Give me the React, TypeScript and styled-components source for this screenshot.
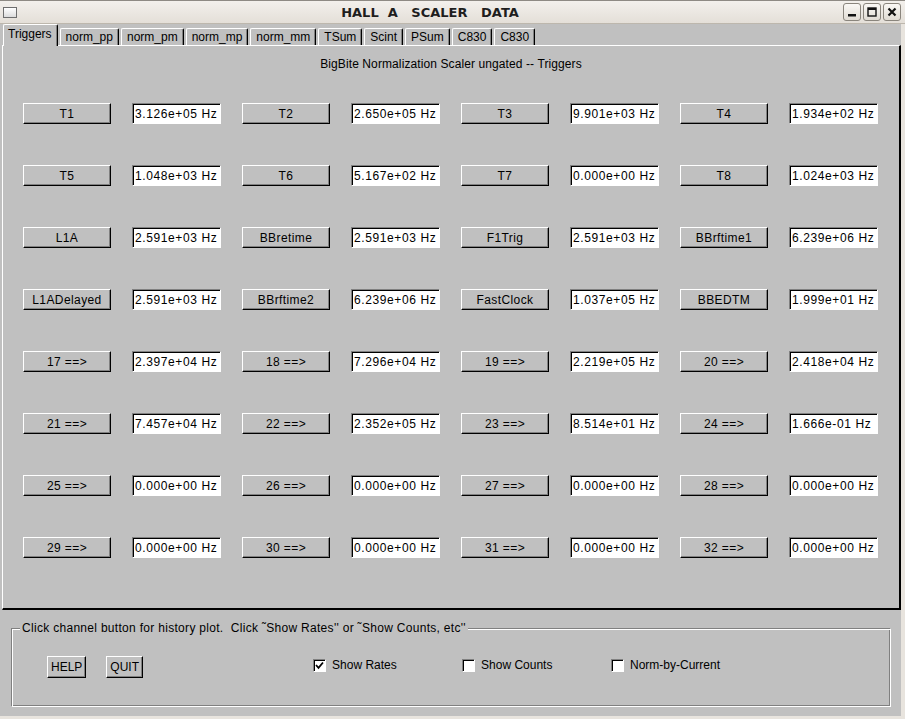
import styled, { createGlobalStyle } from "styled-components";

const GlobalStyle = createGlobalStyle`
  html, body {
    margin: 0;
    padding: 0;
    background: #e8e4de;
  }
  body {
    font-family: "Liberation Sans", Arial, sans-serif;
    font-size: 12px;
    color: #000;
  }
`;

const Window = styled.div`
  width: 905px;
  height: 719px;
  display: flex;
  flex-direction: column;
  background: #e8e4de;
  overflow: hidden;
`;

const TitleBar = styled.div`
  box-sizing: border-box;
  height: 24px;
  display: flex;
  align-items: center;
  padding: 0 4px 0 3px;
  background: linear-gradient(#f3f0ec, #e4dfd8);
  border-top: 1px solid #8e8a84;
  border-bottom: 1px solid #bdb7ad;
`;

const AppIcon = styled.div`
  box-sizing: border-box;
  width: 14px;
  height: 11px;
  border: 1px solid #6e6e6e;
  background: linear-gradient(#ffffff, #dcdcdc);
`;

const Title = styled.div`
  flex: 1;
  text-align: center;
  white-space: pre;
  font-family: "DejaVu Sans", sans-serif;
  font-weight: bold;
  font-size: 13px;
  color: #1e1e1e;
`;

const WinButtons = styled.div`
  display: flex;
  gap: 2px;
`;

const WinButton = styled.div`
  box-sizing: border-box;
  width: 18px;
  height: 18px;
  border: 1px solid #8a857d;
  border-radius: 3px;
  background: linear-gradient(#faf8f5, #e0dbd3);
  display: flex;
  align-items: center;
  justify-content: center;
`;

const Body = styled.div`
  flex: 1;
  display: flex;
  flex-direction: column;
  background: #c0c0c0;
  margin: 0 4px 3px 0;
`;

const TabStrip = styled.div`
  height: 21px;
  display: flex;
  align-items: flex-end;
  gap: 2px;
  padding-left: 3px;
  position: relative;
  z-index: 1;
`;

const Tab = styled.div<{ $active?: boolean }>`
  box-sizing: border-box;
  height: ${(p) => (p.$active ? 22 : 17)}px;
  margin-bottom: ${(p) => (p.$active ? -1 : 0)}px;
  padding: ${(p) => (p.$active ? "2px 5px 0 4px" : "1px 5px 0")};
  line-height: 14px;
  background: #c0c0c0;
  border-top: 1px solid #fff;
  border-left: 1px solid #fff;
  border-right: 1px solid #000;
  border-top-left-radius: 2px;
  border-top-right-radius: 2px;
  box-shadow: inset -1px 0 0 #808080;
  white-space: nowrap;
`;

const Panel = styled.div`
  box-sizing: border-box;
  height: 565px;
  margin-left: 2px;
  border-top: 1px solid #fff;
  border-left: 1px solid #fff;
  border-right: 2px solid #000;
  border-bottom: 2px solid #000;
`;

const Heading = styled.div`
  padding-top: 11px;
  line-height: 14px;
  text-align: center;
  letter-spacing: 0.1px;
`;

const Grid = styled.div`
  display: grid;
  grid-template-columns: repeat(4, 88px 89px);
  grid-auto-rows: 21px;
  column-gap: 21px;
  row-gap: 41px;
  margin-top: 32px;
  padding-left: 20px;
`;

const ChannelButton = styled.button`
  box-sizing: border-box;
  margin: 0;
  padding: 0;
  font: inherit;
  color: #000;
  background: #c0c0c0;
  border: 1px solid;
  border-color: #fff #000 #000 #fff;
  box-shadow: inset -1px -1px 0 #808080;
  text-align: center;
  letter-spacing: 0.4px;
  white-space: nowrap;
`;

const Field = styled.div`
  box-sizing: border-box;
  background: #fff;
  border: 1px solid;
  border-color: #808080 #fff #fff #808080;
  box-shadow: inset 1px 1px 0 #000;
  padding: 0 0 0 2px;
  line-height: 20px;
  letter-spacing: 0.6px;
  white-space: nowrap;
`;

const Footer = styled.div`
  flex: 1;
  padding: 11px 10px 0 11px;
`;

const Group = styled.fieldset`
  box-sizing: border-box;
  height: 86px;
  margin: 0;
  padding: 0;
  border: 1px solid;
  border-color: #808080 #fff #fff #808080;
  box-shadow: inset 1px 1px 0 #fff, inset -1px -1px 0 #808080;
`;

const Legend = styled.legend`
  margin-left: 8px;
  padding: 0 2px;
  line-height: 14px;
  letter-spacing: 0.3px;
  background: #c0c0c0;
`;

const Controls = styled.div`
  display: flex;
  align-items: center;
  margin-top: 21px;
  padding-left: 35px;
`;

const ActionButton = styled(ChannelButton)`
  height: 22px;
  padding: 0 3px;
  margin-right: 20px;
  letter-spacing: 0;
`;

const CheckGroup = styled.div`
  display: flex;
  margin-left: 150px;
  margin-bottom: 4px;
`;

const CheckItem = styled.label`
  width: 149px;
  display: flex;
  align-items: center;
  gap: 6px;
  line-height: 14px;
`;

const CheckBox = styled.span`
  box-sizing: border-box;
  width: 13px;
  height: 13px;
  background: #fff;
  border: 1px solid;
  border-color: #808080 #fff #fff #808080;
  box-shadow: inset 1px 1px 0 #000;
  display: flex;
  align-items: center;
  justify-content: center;
`;

const tabs = [
  "Triggers",
  "norm_pp",
  "norm_pm",
  "norm_mp",
  "norm_mm",
  "TSum",
  "Scint",
  "PSum",
  "C830",
  "C830",
];

const channels: [string, string][] = [
  ["T1", "3.126e+05 Hz"], ["T2", "2.650e+05 Hz"], ["T3", "9.901e+03 Hz"], ["T4", "1.934e+02 Hz"],
  ["T5", "1.048e+03 Hz"], ["T6", "5.167e+02 Hz"], ["T7", "0.000e+00 Hz"], ["T8", "1.024e+03 Hz"],
  ["L1A", "2.591e+03 Hz"], ["BBretime", "2.591e+03 Hz"], ["F1Trig", "2.591e+03 Hz"], ["BBrftime1", "6.239e+06 Hz"],
  ["L1ADelayed", "2.591e+03 Hz"], ["BBrftime2", "6.239e+06 Hz"], ["FastClock", "1.037e+05 Hz"], ["BBEDTM", "1.999e+01 Hz"],
  ["17 ==>", "2.397e+04 Hz"], ["18 ==>", "7.296e+04 Hz"], ["19 ==>", "2.219e+05 Hz"], ["20 ==>", "2.418e+04 Hz"],
  ["21 ==>", "7.457e+04 Hz"], ["22 ==>", "2.352e+05 Hz"], ["23 ==>", "8.514e+01 Hz"], ["24 ==>", "1.666e-01 Hz"],
  ["25 ==>", "0.000e+00 Hz"], ["26 ==>", "0.000e+00 Hz"], ["27 ==>", "0.000e+00 Hz"], ["28 ==>", "0.000e+00 Hz"],
  ["29 ==>", "0.000e+00 Hz"], ["30 ==>", "0.000e+00 Hz"], ["31 ==>", "0.000e+00 Hz"], ["32 ==>", "0.000e+00 Hz"],
];

const checks = [
  { label: "Show Rates", on: true },
  { label: "Show Counts", on: false },
  { label: "Norm-by-Current", on: false },
];

const App = () => {
  return (
    <>
      <GlobalStyle />
      <Window>
        <TitleBar>
          <AppIcon />
          <Title>{"HALL  A   SCALER   DATA"}</Title>
          <WinButtons>
            <WinButton>
              <svg width="10" height="10" viewBox="0 0 10 10">
                <rect x="1" y="7" width="8" height="2.5" fill="#111" />
              </svg>
            </WinButton>
            <WinButton>
              <svg width="10" height="10" viewBox="0 0 10 10">
                <rect x="1" y="1" width="8" height="8" fill="none" stroke="#111" strokeWidth="1.4" />
                <rect x="1" y="1" width="8" height="2" fill="#111" />
              </svg>
            </WinButton>
            <WinButton>
              <svg width="10" height="10" viewBox="0 0 10 10">
                <path d="M1.5 1.5 L8.5 8.5 M8.5 1.5 L1.5 8.5" stroke="#111" strokeWidth="2.2" />
              </svg>
            </WinButton>
          </WinButtons>
        </TitleBar>
        <Body>
          <TabStrip>
            {tabs.map((t, i) => (
              <Tab key={i} $active={i === 0}>
                {t}
              </Tab>
            ))}
          </TabStrip>
          <Panel>
            <Heading>BigBite Normalization Scaler ungated -- Triggers</Heading>
            <Grid>
              {channels.map(([name, rate]) => [
                <ChannelButton key={name}>{name}</ChannelButton>,
                <Field key={name + "-v"}>{rate}</Field>,
              ])}
            </Grid>
          </Panel>
          <Footer>
            <Group>
              <Legend>
                Click channel button for history plot.&nbsp; Click ˜Show Rates'' or ˜Show Counts, etc''
              </Legend>
              <Controls>
                <ActionButton>HELP</ActionButton>
                <ActionButton>QUIT</ActionButton>
                <CheckGroup>
                  {checks.map((c) => (
                    <CheckItem key={c.label}>
                      <CheckBox>
                        {c.on && (
                          <svg width="9" height="9" viewBox="0 0 9 9">
                            <path d="M1 4 L3.5 6.8 L8 1.5" fill="none" stroke="#000" strokeWidth="1.8" />
                          </svg>
                        )}
                      </CheckBox>
                      {c.label}
                    </CheckItem>
                  ))}
                </CheckGroup>
              </Controls>
            </Group>
          </Footer>
        </Body>
      </Window>
    </>
  );
};

export default App;
